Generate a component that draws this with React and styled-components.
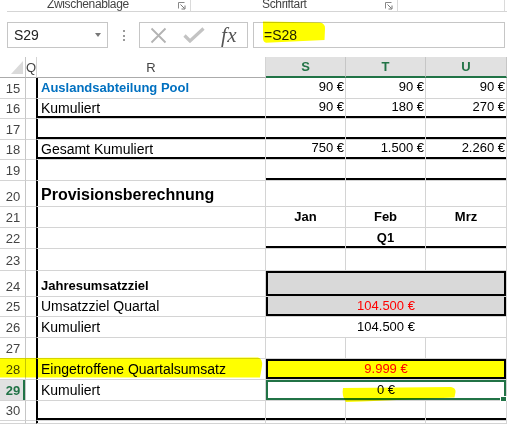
import React from 'react';
import styled, { createGlobalStyle } from 'styled-components';

const GlobalStyle = createGlobalStyle`
  html, body { margin: 0; padding: 0; background: #fff; }
  body { font-family: "Liberation Sans", Arial, sans-serif; }
`;

const GREEN = '#217346';
const GRID = '26px 11px 229px 80px 80px 81px';

const Screen = styled.div`
  position: relative;
  width: 507px;
  height: 424px;
  overflow: hidden;
  background: #fff;
`;

/* ribbon group labels (cut at top) */
const Ribbon = styled.div`
  display: flex;
  height: 11px;
  margin-left: 7px;
  border-bottom: 1px solid #d5d5d5;
  overflow: hidden;
`;

const RibbonGroup = styled.div`
  box-sizing: border-box;
  display: flex;
  align-items: flex-start;
  width: ${p => p.$w}px;
  padding-left: ${p => p.$pad || 0}px;
  border-right: 1px solid #dadada;
`;

const GroupLabel = styled.span`
  margin-top: -2px;
  font-size: 12px;
  line-height: 12px;
  letter-spacing: -0.35px;
  color: #444;
  white-space: nowrap;
`;

const Launcher = styled.svg`
  margin: 2px 4px 0 auto;
  flex: none;
`;

/* formula bar */
const FormulaBar = styled.div`
  box-sizing: border-box;
  display: flex;
  align-items: flex-start;
  height: 45px;
  padding: 10px 0 0 7px;
`;

const NameBox = styled.div`
  box-sizing: border-box;
  display: flex;
  align-items: center;
  justify-content: space-between;
  width: 101px;
  height: 26px;
  padding: 0 6px;
  border: 1px solid #c6c6c6;
  font-size: 14px;
  color: #222;
`;

const Caret = styled.span`
  width: 0;
  height: 0;
  border-left: 3.5px solid transparent;
  border-right: 3.5px solid transparent;
  border-top: 4px solid #777;
`;

const Dots = styled.div`
  display: flex;
  flex-direction: column;
  gap: 2.5px;
  margin: 8px 0 0 15px;
  span {
    width: 2px;
    height: 2px;
    background: #9a9a9a;
  }
`;

const FxButtons = styled.div`
  box-sizing: border-box;
  display: flex;
  align-items: center;
  width: 109px;
  height: 26px;
  margin-left: 14px;
  padding-left: 10px;
  border: 1px solid #c6c6c6;
`;

const Fx = styled.span`
  margin-left: 16px;
  font-family: "Liberation Serif", "Times New Roman", serif;
  font-style: italic;
  font-size: 21px;
  color: #555;
  letter-spacing: 0.5px;
`;

const FormulaInput = styled.div`
  box-sizing: border-box;
  display: flex;
  align-items: center;
  width: 252px;
  height: 26px;
  margin-left: 5px;
  padding-left: 10px;
  border: 1px solid #c6c6c6;
  font-size: 14px;
  color: #222;
`;

/* sheet */
const SheetRow = styled.div`
  display: grid;
  grid-template-columns: ${GRID};
  height: ${p => p.$h}px;
`;

const Corner = styled.div`
  box-sizing: border-box;
  display: flex;
  align-items: flex-end;
  justify-content: flex-end;
  padding: 0 2px 3px 0;
  border-right: 1px solid #c6c6c6;
  border-bottom: 1px solid #ababab;
  &::after {
    content: '';
    width: 0;
    height: 0;
    border-left: 12px solid transparent;
    border-bottom: 13px solid #dadada;
  }
`;

const ColHead = styled.div`
  box-sizing: border-box;
  display: flex;
  align-items: center;
  justify-content: center;
  background: ${p => (p.$sel ? '#e1e1e1' : '#fff')};
  color: ${p => (p.$sel ? GREEN : '#444')};
  font-weight: ${p => (p.$sel ? 700 : 400)};
  font-size: 13px;
  border-right: 1px solid ${p => (p.$sel ? '#c6c6c6' : '#d4d4d4')};
  border-bottom: ${p => (p.$sel ? `2px solid ${GREEN}` : '1px solid #ababab')};
`;

const RowHead = styled.div`
  box-sizing: border-box;
  display: flex;
  align-items: flex-end;
  justify-content: center;
  padding: 0 0 2px 1px;
  background: ${p => (p.$sel ? '#e1e1e1' : '#fff')};
  color: ${p => (p.$sel ? GREEN : '#444')};
  font-weight: ${p => (p.$sel ? 700 : 400)};
  font-size: 13px;
  line-height: 15px;
  border-right: 1px solid #c6c6c6;
  border-bottom: 1px solid #d4d4d4;
  box-shadow: ${p => (p.$sel ? `inset -2px 0 0 ${GREEN}` : 'none')};
`;

const QCell = styled.div`
  box-sizing: border-box;
  border-right: 1px solid ${p => (p.$edge ? '#000' : '#d4d4d4')};
  border-bottom: 1px solid #d4d4d4;
`;

const JUSTIFY = { left: 'flex-start', right: 'flex-end', center: 'center' };

const frame = p => {
  const s = [];
  if (p.$t) s.push('inset 0 2px 0 #000');
  if (p.$b) s.push('inset 0 -2px 0 #000');
  if (p.$l) s.push(`inset ${p.$l}px 0 0 #000`);
  if (p.$r) s.push('inset -2px 0 0 #000');
  if (p.$sel) s.push(`inset 0 0 0 2px ${GREEN}`);
  return s.length ? s.join(', ') : 'none';
};

const Cell = styled.div`
  position: relative;
  grid-column: span ${p => p.$span || 1};
  box-sizing: border-box;
  display: flex;
  align-items: flex-end;
  justify-content: ${p => JUSTIFY[p.$align || 'left']};
  padding: ${p => (p.$align === 'center' ? '0 2px 2px' : p.$align === 'right' ? '0 1px 3px 4px' : '0 2px 2px 4px')};
  border-right: 1px solid #d4d4d4;
  border-bottom: 1px solid #d4d4d4;
  background: ${p => p.$bg || '#fff'};
  color: ${p => p.$color || '#000'};
  font-size: ${p => p.$size || 14}px;
  font-weight: ${p => (p.$bold ? 700 : 400)};
  line-height: 1.15;
  white-space: nowrap;
  box-shadow: ${frame};
`;

const FillHandle = styled.span`
  position: absolute;
  right: -1px;
  bottom: -3px;
  width: 5px;
  height: 5px;
  background: ${GREEN};
  border: 1px solid #fff;
`;

const Highlights = styled.svg`
  position: absolute;
  left: 0;
  top: 0;
  pointer-events: none;
  mix-blend-mode: multiply;
`;

const BLUE = '#0070c0';
const RED = '#ff0000';
const GRAY = '#d9d9d9';
const YELLOW = '#ffff00';

const num = (t, extra = {}) => ({ t, align: 'right', size: 13, ...extra });

const rows = [
  { n: 15, h: 21, r: { t: 'Auslandsabteilung Pool', bold: true, size: 13, color: BLUE }, cells: [num('90 €'), num('90 €'), num('90 €')] },
  { n: 16, h: 20, r: { t: 'Kumuliert', b: true }, cells: [num('90 €', { b: true }), num('180 €', { b: true }), num('270 €', { b: true })] },
  { n: 17, h: 21, r: { b: true }, cells: [{ b: true }, { b: true }, { b: true }] },
  { n: 18, h: 20, r: { t: 'Gesamt Kumuliert', b: true }, cells: [num('750 €', { b: true }), num('1.500 €', { b: true }), num('2.260 €', { b: true })] },
  { n: 19, h: 21, r: {}, cells: [{ b: true }, { b: true }, { b: true }] },
  { n: 20, h: 26, r: { t: 'Provisionsberechnung', bold: true, size: 16 }, cells: [{}, {}, {}] },
  { n: 21, h: 21, r: {}, cells: [
    { t: 'Jan', align: 'center', bold: true, size: 13 },
    { t: 'Feb', align: 'center', bold: true, size: 13 },
    { t: 'Mrz', align: 'center', bold: true, size: 13 },
  ] },
  { n: 22, h: 21, r: {}, cells: [{ b: true }, { t: 'Q1', align: 'center', bold: true, size: 13, b: true }, { b: true }] },
  { n: 23, h: 22, r: {}, cells: [{}, {}, {}] },
  { n: 24, h: 26, r: { t: 'Jahresumsatzziel', bold: true, size: 13 }, cells: [{ span: 3, bg: GRAY, t: '', tt: true, b: true, l: 2, rr: true }] },
  { n: 25, h: 20, r: { t: 'Umsatzziel Quartal' }, cells: [{ span: 3, bg: GRAY, t: '104.500 €', align: 'center', size: 13, color: RED, b: true, l: 2, rr: true }] },
  { n: 26, h: 21, r: { t: 'Kumuliert' }, cells: [{ span: 3, t: '104.500 €', align: 'center', size: 13 }] },
  { n: 27, h: 21, r: {}, cells: [{}, {}, {}] },
  { n: 28, h: 21, r: { t: 'Eingetroffene Quartalsumsatz' }, cells: [{ span: 3, bg: YELLOW, t: '9.999 €', align: 'center', size: 13, color: RED, tt: true, b: true, l: 2, rr: true }] },
  { n: 29, h: 21, sel: true, r: { t: 'Kumuliert' }, cells: [{ span: 3, t: '0 €', align: 'center', size: 13, sel: true, handle: true }] },
  { n: 30, h: 20, r: { b: true }, cells: [{ b: true }, { b: true }, { b: true }] },
  { n: 31, h: 3, hideNum: true, r: {}, cells: [{}, {}, {}] },
];

function DataCell({ c, left }) {
  return (
    <Cell
      $span={c.span}
      $align={c.align}
      $bold={c.bold}
      $size={c.size}
      $color={c.color}
      $bg={c.bg}
      $t={c.tt}
      $b={c.b}
      $l={left ? 1 : c.l}
      $r={c.rr}
      $sel={c.sel}
    >
      {c.t}
      {c.handle && <FillHandle />}
    </Cell>
  );
}

export default function App() {
  return (
    <Screen>
      <GlobalStyle />

      <Ribbon>
        <RibbonGroup $w={184} $pad={40}>
          <GroupLabel>Zwischenablage</GroupLabel>
          <Launcher width="8" height="8" viewBox="0 0 8 8">
            <path d="M0.5 6.5V0.5H6.5" fill="none" stroke="#888" />
            <path d="M2.5 2.5L6.5 6.5M7 3.5V7H3.5" fill="none" stroke="#777" />
          </Launcher>
        </RibbonGroup>
        <RibbonGroup $w={207} $pad={71}>
          <GroupLabel>Schriftart</GroupLabel>
          <Launcher width="8" height="8" viewBox="0 0 8 8">
            <path d="M0.5 6.5V0.5H6.5" fill="none" stroke="#888" />
            <path d="M2.5 2.5L6.5 6.5M7 3.5V7H3.5" fill="none" stroke="#777" />
          </Launcher>
        </RibbonGroup>
        <RibbonGroup $w={107} />
      </Ribbon>

      <FormulaBar>
        <NameBox>
          S29
          <Caret />
        </NameBox>
        <Dots>
          <span />
          <span />
          <span />
        </Dots>
        <FxButtons>
          <svg width="17" height="17" viewBox="0 0 17 17">
            <path d="M1.5 1.5L15.5 15.5M15.5 1.5L1.5 15.5" stroke="#b3b3b3" strokeWidth="1.8" />
          </svg>
          <svg width="22" height="16" viewBox="0 0 22 16" style={{ marginLeft: 16 }}>
            <path d="M1.5 8.5L7 14L20.5 1.5" fill="none" stroke="#c3c3c3" strokeWidth="3.2" />
          </svg>
          <Fx>fx</Fx>
        </FxButtons>
        <FormulaInput>=S28</FormulaInput>
      </FormulaBar>

      <SheetRow $h={21}>
        <Corner />
        <ColHead>Q</ColHead>
        <ColHead>R</ColHead>
        <ColHead $sel>S</ColHead>
        <ColHead $sel>T</ColHead>
        <ColHead $sel>U</ColHead>
      </SheetRow>

      {rows.map(row => (
        <SheetRow key={row.n} $h={row.h}>
          <RowHead $sel={row.sel}>{row.hideNum ? null : row.n}</RowHead>
          <QCell $edge />
          <DataCell c={row.r} left />
          {row.cells.map((c, i) => (
            <DataCell key={i} c={c} />
          ))}
        </SheetRow>
      ))}

      <Highlights width="507" height="424" viewBox="0 0 507 424">
        <path d="M263 21.5L320 22.5Q325.5 23.5 325 29L324.5 40L266 42.8Q262.5 42 263 36Z" fill={YELLOW} />
        <path d="M0 358L258 357.5Q263 359 262 366L260 377.5L0 377.5Z" fill={YELLOW} />
        <path d="M343 388L451 387Q456 388 455.5 392L454.5 397.5L362 401.5L346 402Q341.5 396 343 388Z" fill={YELLOW} />
      </Highlights>
    </Screen>
  );
}
